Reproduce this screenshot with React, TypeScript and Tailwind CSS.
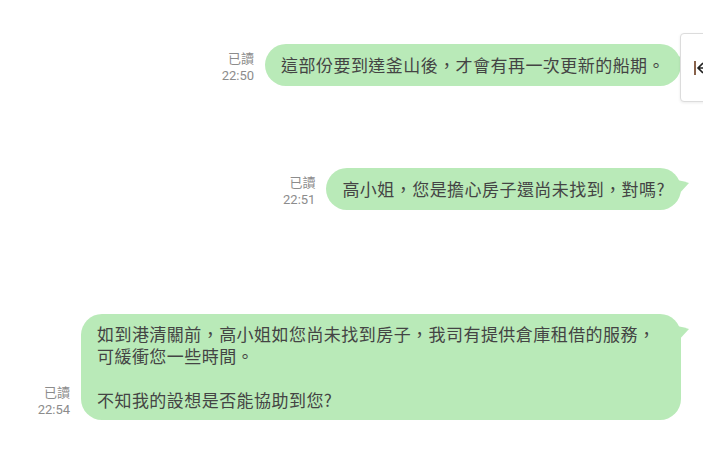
import React from "react";

const font = { fontFamily: '"Noto Sans CJK TC", "Noto Sans CJK JP", sans-serif' };

function Tail() {
  return (
    <svg
      className="absolute -right-[8px] top-[12px]"
      width="12"
      height="16"
      viewBox="0 0 12 16"
    >
      <path d="M0 0 Q6 1 12 3 L0 16 Z" fill="#b9eab8" />
    </svg>
  );
}

function Meta({ time }: { time: string }) {
  return (
    <div className="flex flex-col items-end text-[#8c8c8c] leading-[17px] pb-[2px] font-['Roboto','Noto_Sans_CJK_TC',sans-serif]">
      <span className="text-[13px]">已讀</span>
      <span className="text-[13px]">{time}</span>
    </div>
  );
}

function Row({
  time,
  children,
  tail = true,
  className = "",
}: {
  time: string;
  children: React.ReactNode;
  tail?: boolean;
  className?: string;
}) {
  return (
    <div className={`flex justify-end items-end gap-[11px] pr-[22px] ${className}`}>
      <Meta time={time} />
      <div className="relative">
        <div
          style={font}
          className="bg-[#b9eab8] text-[#444] text-[17px] tracking-[0.45px] leading-[22px] px-4 py-[10px] rounded-[21px]"
        >
          {children}
        </div>
        {tail && <Tail />}
      </div>
    </div>
  );
}

export default function App() {
  return (
    <div className="relative w-[703px] h-[451px] bg-white overflow-hidden">
      <div className="pt-[44px]">
        <Row time="22:50">這部份要到達釜山後，才會有再一次更新的船期。</Row>
        <Row time="22:51" className="mt-[82px]">
          高小姐，您是擔心房子還尚未找到，對嗎?
        </Row>
        <Row time="22:54" className="mt-[104px]">
          <div className="w-[568px] whitespace-pre-line -my-px">
            {"如到港清關前，高小姐如您尚未找到房子，我司有提供倉庫租借的服務，\n可緩衝您一些時間。\n\n不知我的設想是否能協助到您?"}
          </div>
        </Row>
      </div>
      <div className="absolute left-[680px] top-[33px] w-[40px] h-[69px] bg-white border border-[#dcdcdc] rounded-l-[4px] shadow-[0_1px_3px_rgba(0,0,0,0.08)] flex items-center pl-[13px]">
        <svg width="16" height="14" viewBox="0 0 16 14" className="shrink-0">
          <path d="M1 0 V14" stroke="#6b3a1e" strokeWidth="1.6" />
          <path d="M4 7 H16 M9 2 L4 7 L9 12" stroke="#222" strokeWidth="1.6" fill="none" />
        </svg>
      </div>
    </div>
  );
}
